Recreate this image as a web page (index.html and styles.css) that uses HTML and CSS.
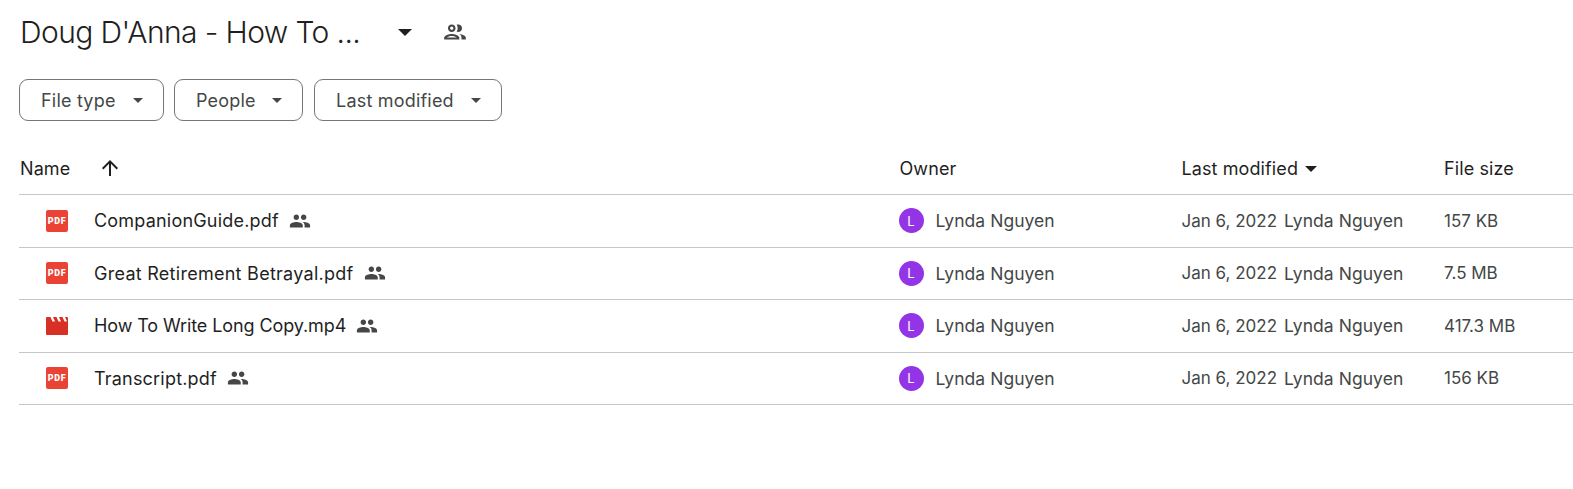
FILE: index.html
```html
<!DOCTYPE html>
<html lang="en">
<head>
    <meta charset="UTF-8">
    <meta name="viewport" content="width=device-width, initial-scale=1.0">
    <title>Doug D'Anna - How To ...</title>
    <link rel="stylesheet" href="styles.css">
</head>
<body>
    <svg class="icon-defs" width="0" height="0">
        <symbol id="people" viewBox="0 0 24 24">
            <path d="M16 11c1.66 0 2.99-1.34 2.99-3S17.66 5 16 5c-1.66 0-3 1.34-3 3s1.34 3 3 3zm-8 0c1.66 0 2.99-1.34 2.99-3S9.66 5 8 5C6.34 5 5 6.34 5 8s1.34 3 3 3zm0 2c-2.33 0-7 1.17-7 3.5V19h14v-2.5c0-2.33-4.67-3.5-7-3.5zm8 0c-.29 0-.62.02-.97.05 1.16.84 1.97 1.97 1.97 3.45V19h6v-2.5c0-2.33-4.67-3.5-7-3.5z"/>
        </symbol>
    </svg>

    <div class="title-bar">
        <h1>Doug D'Anna - How To ...</h1>
        <span class="title-caret"></span>
        <svg class="title-people" viewBox="0 0 24 24"><path d="M9 13.75c-2.34 0-7 1.17-7 3.5V19h14v-1.75c0-2.33-4.66-3.5-7-3.5zM4.34 17c.84-.58 2.87-1.25 4.66-1.25s3.82.67 4.66 1.25H4.34zM9 12c1.93 0 3.5-1.57 3.5-3.5S10.93 5 9 5 5.5 6.57 5.5 8.5 7.07 12 9 12zm0-5c.83 0 1.5.67 1.5 1.5S9.83 10 9 10s-1.5-.67-1.5-1.5S8.17 7 9 7zm7.04 6.81c1.16.84 1.96 1.96 1.96 3.44V19h4v-1.75c0-2.02-3.5-3.17-5.96-3.44zM15 12c1.93 0 3.5-1.57 3.5-3.5S16.93 5 15 5c-.54 0-1.04.13-1.5.35.63.89 1 1.98 1 3.15s-.37 2.26-1 3.15c.46.22.96.35 1.5.35z"/></svg>
    </div>

    <div class="filters">
        <button class="chip chip-type">File type <span class="caret"></span></button>
        <button class="chip chip-people">People <span class="caret"></span></button>
        <button class="chip chip-modified">Last modified <span class="caret"></span></button>
    </div>

    <div class="file-table">
        <div class="row head-row">
            <div class="cell name-cell">
                <span class="head-name">Name</span>
                <svg class="sort-arrow" viewBox="0 0 24 24"><path d="M4 12l1.41 1.41L11 7.83V20h2V7.83l5.58 5.59L20 12l-8-8-8 8z"/></svg>
            </div>
            <div class="cell">Owner</div>
            <div class="cell">Last modified <span class="head-caret"></span></div>
            <div class="cell">File size</div>
        </div>

        <div class="row">
            <div class="cell name-cell">
                <span class="pdf-icon">PDF</span>
                <span class="file-name">CompanionGuide.pdf</span>
                <svg class="shared"><use href="#people"/></svg>
            </div>
            <div class="cell owner-cell"><span class="avatar">L</span><span class="person">Lynda Nguyen</span></div>
            <div class="cell modified-cell"><span class="date">Jan 6, 2022</span><span class="person">Lynda Nguyen</span></div>
            <div class="cell size">157 KB</div>
        </div>

        <div class="row">
            <div class="cell name-cell">
                <span class="pdf-icon">PDF</span>
                <span class="file-name file-name-wide">Great Retirement Betrayal.pdf</span>
                <svg class="shared"><use href="#people"/></svg>
            </div>
            <div class="cell owner-cell"><span class="avatar">L</span><span class="person">Lynda Nguyen</span></div>
            <div class="cell modified-cell"><span class="date">Jan 6, 2022</span><span class="person">Lynda Nguyen</span></div>
            <div class="cell size">7.5 MB</div>
        </div>

        <div class="row">
            <div class="cell name-cell">
                <svg class="video-icon" viewBox="0 0 22 18">
                    <path fill="#d93025" d="M1 0h20a1 1 0 0 1 1 1v16a1 1 0 0 1-1 1H1a1 1 0 0 1-1-1V1a1 1 0 0 1 1-1z"/>
                    <path fill="#fff" d="M4.500 0H7l2 4.500H6.500zM10.500 0H13l2 4.500h-2.500zM16.500 0H19l2 4.500h-2.500z"/>
                </svg>
                <span class="file-name file-name-tight">How To Write Long Copy.mp4</span>
                <svg class="shared"><use href="#people"/></svg>
            </div>
            <div class="cell owner-cell"><span class="avatar">L</span><span class="person">Lynda Nguyen</span></div>
            <div class="cell modified-cell"><span class="date">Jan 6, 2022</span><span class="person">Lynda Nguyen</span></div>
            <div class="cell size">417.3 MB</div>
        </div>

        <div class="row">
            <div class="cell name-cell">
                <span class="pdf-icon">PDF</span>
                <span class="file-name">Transcript.pdf</span>
                <svg class="shared"><use href="#people"/></svg>
            </div>
            <div class="cell owner-cell"><span class="avatar">L</span><span class="person">Lynda Nguyen</span></div>
            <div class="cell modified-cell"><span class="date">Jan 6, 2022</span><span class="person">Lynda Nguyen</span></div>
            <div class="cell size">156 KB</div>
        </div>
    </div>
</body>
</html>
```

FILE: styles.css
```css
body {
    background: white;
    color: #1f1f1f;
    font-family: Inter, Arial, sans-serif;
    font-size: 18px;
    margin: 0;
    overflow: hidden;
}
.icon-defs {
    display: block;
}
.title-bar {
    display: flex;
    align-items: center;
    height: 64px;
    padding-left: 20px;
}
h1 {
    font-size: 30px;
    font-weight: 350;
    letter-spacing: -0.6px;
    margin: 0;
    width: 378px;
    white-space: nowrap;
}
.title-caret {
    border-left: 7px solid transparent;
    border-right: 7px solid transparent;
    border-top: 7px solid #1f1f1f;
    margin-top: 1px;
}
.title-people {
    width: 26px;
    height: 26px;
    margin-left: 30px;
    fill: #444746;
}
.filters {
    display: flex;
    gap: 10px;
    margin: 15px 0 0 19px;
}
.chip {
    display: flex;
    align-items: center;
    justify-content: space-between;
    height: 42px;
    padding: 0 20px 0 21px;
    background: white;
    color: #444746;
    border: 1px solid #747775;
    border-radius: 9px;
    font-family: inherit;
    font-size: 18px;
    font-weight: 400;
    letter-spacing: 0.2px;
    box-sizing: border-box;
}
.chip-type {
    width: 145px;
}
.chip-people {
    width: 129px;
}
.chip-modified {
    width: 188px;
    margin-left: 1px;
}
.caret {
    border-left: 5px solid transparent;
    border-right: 5px solid transparent;
    border-top: 5px solid #444746;
}
.file-table {
    margin: 21px 0 0 19px;
}
.row {
    display: grid;
    grid-template-columns: 880.500px 282px 262.500px 1fr;
    align-items: center;
    height: 52.500px;
    border-bottom: 1px solid #c7c7c7;
    box-sizing: border-box;
}
.head-row {
    height: 53px;
    letter-spacing: 0.1px;
}
.cell {
    display: flex;
    align-items: center;
    white-space: nowrap;
}
.head-name {
    margin-left: 1px;
    width: 78px;
}
.sort-arrow {
    width: 24px;
    height: 24px;
    fill: #1f1f1f;
}
.head-caret {
    margin-left: 7px;
    margin-top: 2px;
    border-left: 6px solid transparent;
    border-right: 6px solid transparent;
    border-top: 6px solid #1f1f1f;
}
.pdf-icon {
    display: flex;
    align-items: center;
    justify-content: center;
    width: 22px;
    height: 22px;
    margin-left: 27px;
    background: #ea4335;
    color: white;
    border-radius: 2px;
    font-family: Roboto, Arial, sans-serif;
    font-size: 9px;
    font-weight: 900;
    letter-spacing: 0.6px;
}
.video-icon {
    width: 22px;
    height: 18px;
    margin-left: 27px;
}
.file-name {
    margin-left: 26px;
    letter-spacing: 0.2px;
}
.file-name-wide {
    letter-spacing: 0.27px;
}
.file-name-tight {
    letter-spacing: -0.1px;
}
.shared {
    width: 22px;
    height: 22px;
    margin-left: 10px;
    fill: #444746;
}
.avatar {
    display: flex;
    align-items: center;
    justify-content: center;
    width: 25px;
    height: 25px;
    margin: 0 12px 0 -1px;
    background: #9334e6;
    color: white;
    border-radius: 50%;
    font-size: 13px;
}
.person {
    color: #444746;
    font-size: 17.500px;
    letter-spacing: 0.05px;
}
.date {
    color: #444746;
    font-size: 17px;
    margin-right: 7px;
}
.size {
    color: #444746;
    font-size: 17px;
}
```
